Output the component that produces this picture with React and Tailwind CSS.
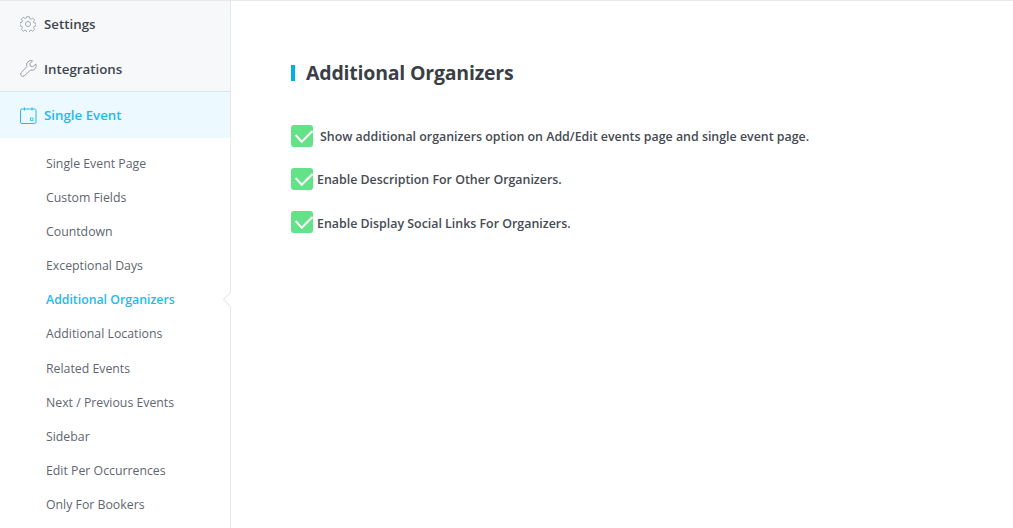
import React from 'react';

const subItems = [
  'Single Event Page',
  'Custom Fields',
  'Countdown',
  'Exceptional Days',
  'Additional Organizers',
  'Additional Locations',
  'Related Events',
  'Next / Previous Events',
  'Sidebar',
  'Edit Per Occurrences',
  'Only For Bookers',
];

const options = [
  { label: 'Show additional organizers option on Add/Edit events page and single event page.', gap: 'ml-[7px]', nudge: 'translate-y-px' },
  { label: 'Enable Description For Other Organizers.', gap: 'ml-[4px]', nudge: 'translate-y-px' },
  { label: 'Enable Display Social Links For Organizers.', gap: 'ml-[4px]', nudge: 'translate-y-[2px]' },
];

const GearIcon = () => (
  <svg width="16" height="16" viewBox="0 0 24 24" fill="none" stroke="#9aa0a6" strokeWidth="1.3" strokeLinejoin="round">
    <circle cx="12" cy="12" r="3.8" />
    <path d="M10 1h4l.6 3.1 2 .8 2.6-1.8 2.8 2.8-1.8 2.6.8 2 3 .6v3.8l-3 .6-.8 2 1.8 2.6-2.8 2.8-2.6-1.8-2 .8-.6 3h-4l-.6-3-2-.8-2.6 1.8-2.8-2.8 1.8-2.6-.8-2-3-.6V9.9l3-.6.8-2-1.8-2.6 2.8-2.8 2.6 1.8 2-.8z" />
  </svg>
);

const WrenchIcon = () => (
  <svg width="17" height="17" viewBox="0 0 24 24" fill="none" stroke="#9aa0a6" strokeWidth="1.4" strokeLinejoin="round">
    <path d="M22.3 5.6l-4 4-3.6-.9-.9-3.6 4-4a6.4 6.4 0 0 0-8.2 8.2L1.8 17.8a3.1 3.1 0 0 0 4.4 4.4l8.5-7.8a6.4 6.4 0 0 0 7.6-8.8z" />
  </svg>
);

const CalendarIcon = () => (
  <svg width="17" height="17" viewBox="0 0 17 17" fill="none" stroke="#25b9ef" strokeWidth="1">
    <rect x="0.5" y="2" width="15.5" height="14.5" rx="1.5" />
    <path d="M4.5 0.5v3M12 0.5v3" />
    <rect x="10.5" y="11" width="2.5" height="2.5" strokeWidth="0.8" />
  </svg>
);

const NavRow = ({ icon, label, active }) => (
  <div className={`flex items-center ${active ? 'h-[46px] bg-[#ecf9fe] text-[#25b9ef]' : 'h-[45px] text-[#3f4650]'}`}>
    <span className="ml-5 flex w-6 shrink-0 items-center">{icon}</span>
    <span className="translate-y-px text-[13.3px] font-semibold leading-none">{label}</span>
  </div>
);

const CheckBox = () => (
  <span className="flex h-[22px] w-[22px] shrink-0 items-center justify-center rounded-[3px] bg-[#64e287]">
    <svg width="22" height="22" viewBox="0 0 22 22" fill="none" stroke="#fff" strokeWidth="2">
      <path d="M4.7 10l6 6.7L21.5 6" />
    </svg>
  </span>
);

export default function App() {
  return (
    <div className="flex h-[528px] w-[1013px] overflow-hidden border-t border-[#e6e9eb] bg-white font-['Open_Sans',sans-serif]">
      <aside className="relative w-[231px] shrink-0 border-r border-[#e6e9eb]">
        <div className="border-b border-[#d8e8ef] bg-[#f6f8f9]">
          <NavRow icon={<GearIcon />} label="Settings" />
          <NavRow icon={<WrenchIcon />} label="Integrations" />
        </div>
        <NavRow icon={<CalendarIcon />} label="Single Event" active />
        <ul className="pt-[9.2px]">
          {subItems.map((item) => (
            <li
              key={item}
              className={`flex h-[34.1px] items-center pl-[46px] text-[12.3px] ${
                item === 'Additional Organizers' ? 'font-semibold text-[#25b9ef]' : 'text-[#5f6670]'
              }`}
            >
              {item}
            </li>
          ))}
        </ul>
        {/* little notch on the sidebar edge */}
        <span className="absolute right-[-6px] top-[293px] h-[11px] w-[11px] rotate-45 border-b border-l border-[#e6e9eb] bg-white" />
      </aside>

      <main className="flex-1 pl-[60px] pt-[60px]">
        <h2 className="flex items-center text-[19.5px] font-bold leading-6 tracking-[-0.2px] text-[#3a3f47]">
          <span className="mr-[11px] h-4 w-1 bg-[#00b0e8]" />
          Additional Organizers
        </h2>
        <div className="mt-[40px] flex flex-col gap-[21px]">
          {options.map((opt) => (
            <label key={opt.label} className="flex items-center text-[12.4px] font-semibold text-[#464b54]">
              <CheckBox />
              <span className={`${opt.gap} ${opt.nudge}`}>{opt.label}</span>
            </label>
          ))}
        </div>
      </main>
    </div>
  );
}
